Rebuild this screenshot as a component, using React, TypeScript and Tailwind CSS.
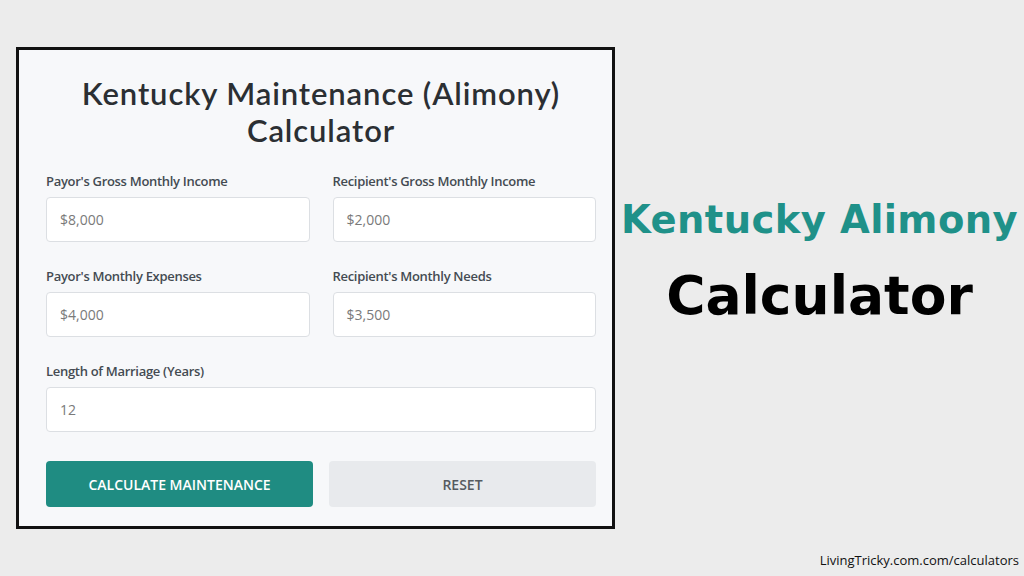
import React from "react";

type Field = { label: string; value: string };

const rows: Field[][] = [
  [
    { label: "Payor's Gross Monthly Income", value: "$8,000" },
    { label: "Recipient's Gross Monthly Income", value: "$2,000" },
  ],
  [
    { label: "Payor's Monthly Expenses", value: "$4,000" },
    { label: "Recipient's Monthly Needs", value: "$3,500" },
  ],
];

function Input({ label, value }: Field) {
  return (
    <div className="flex flex-col">
      <label className="text-[13px] leading-[18px] font-semibold text-[#444b52] tracking-[-0.3px]">{label}</label>
      <div className="mt-[7px] h-[45px] bg-white border border-[#dcdfe3] rounded-[4px] flex items-center pl-[13px] text-[14px] text-[#7a7a7a]">
        {value}
      </div>
    </div>
  );
}

export default function App() {
  return (
    <div
      className="w-[1024px] h-[576px] bg-[#ececec] flex flex-col overflow-hidden"
      style={{ fontFamily: '"Open Sans", "Noto Sans", sans-serif' }}
    >
      <div className="flex pt-[47px] pl-[16px]">
        <div className="w-[599px] h-[482px] bg-[#f7f8fa] border-[3px] border-[#111] pl-[27px] pr-[16px] pt-[25px]">
          <h1
            className="text-center text-[31px] leading-[37px] text-[#2b2f33] font-semibold tracking-[0.9px]"
            style={{ fontFamily: 'Lato, "Open Sans", sans-serif' }}
          >
            <div>Kentucky Maintenance (Alimony)</div>
            <div>Calculator</div>
          </h1>
          <div className="mt-[23px] flex flex-col gap-[25px]">
            {rows.map((r, i) => (
              <div key={i} className="grid grid-cols-2 gap-[23px]">
                {r.map((f) => (
                  <Input key={f.label} {...f} />
                ))}
              </div>
            ))}
            <Input label="Length of Marriage (Years)" value="12" />
          </div>
          <div className="mt-[29px] grid grid-cols-2 gap-[16px]">
            <button className="h-[46px] rounded-[4px] bg-[#1f8c82] text-white text-[14px] font-semibold uppercase">
              Calculate Maintenance
            </button>
            <button className="h-[46px] rounded-[4px] bg-[#e8eaed] text-[#555a60] text-[14px] font-semibold uppercase">
              Reset
            </button>
          </div>
        </div>
        <div className="flex-1 flex flex-col items-center pt-[149px]">
          <div className="text-[38.5px] leading-[48px] font-bold text-[#1f9189] tracking-[0.4px]" style={{ fontFamily: '"DejaVu Sans", sans-serif' }}>
            Kentucky Alimony
          </div>
          <div className="mt-[22px] text-[53.5px] leading-[60px] font-bold text-black" style={{ fontFamily: '"DejaVu Sans", sans-serif' }}>
            Calculator
          </div>
        </div>
      </div>
      <div className="flex-1 flex items-end justify-end pr-[5px] pb-[6px]">
        <span className="text-[13px] text-[#111]">LivingTricky.com.com/calculators</span>
      </div>
    </div>
  );
}
